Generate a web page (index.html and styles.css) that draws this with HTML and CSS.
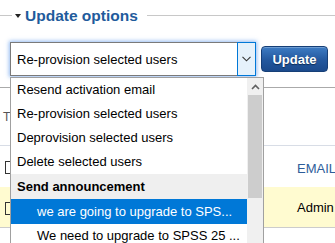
FILE: index.html
```html
<!DOCTYPE html>
<html lang="en">
<head>
    <meta charset="UTF-8">
    <meta name="viewport" content="width=device-width, initial-scale=1.0">
    <title>Update options</title>
    <link rel="stylesheet" href="styles.css">
</head>
<body>

    <fieldset class="options">
        <legend><span class="caret"></span>Update options</legend>
        <div class="action-row">
            <div class="select">
                <span class="select-value">Re-provision selected users</span>
                <span class="select-arrow">
                    <svg width="9" height="6" viewBox="0 0 9 6"><path d="M0.5 0.8 L4.5 4.8 L8.5 0.8" fill="none" stroke="#333" stroke-width="1.1"/></svg>
                </span>

                <!-- open dropdown list, sits over the table -->
                <div class="dropdown">
                    <ul class="dropdown-list">
                        <li>Resend activation email</li>
                        <li>Re-provision selected users</li>
                        <li>Deprovision selected users</li>
                        <li>Delete selected users</li>
                        <li class="group">Send announcement</li>
                        <li class="sub selected">we are going to upgrade to SPS...</li>
                        <li class="sub">We need to upgrade to SPSS 25 ...</li>
                    </ul>
                    <div class="scrollbar">
                        <div class="scroll-up">
                            <svg width="9" height="6" viewBox="0 0 9 6"><path d="M1 5 L4.5 1.5 L8 5" fill="none" stroke="#606060" stroke-width="1.6"/></svg>
                        </div>
                        <div class="scroll-thumb"></div>
                    </div>
                </div>
            </div>
            <button class="btn-update">Update</button>
        </div>
    </fieldset>

    <div class="users">
        <div class="row toolbar-row">
            <div class="cell"><span class="faded">T</span></div>
            <div class="cell"></div>
        </div>
        <div class="row head-row">
            <div class="cell"><span class="checkbox"></span></div>
            <div class="cell head">EMAIL</div>
        </div>
        <div class="row data-row">
            <div class="cell"><span class="checkbox"></span></div>
            <div class="cell">Admin</div>
        </div>
    </div>

</body>
</html>
```

FILE: styles.css
```css
/* Page */
html {
    height: 243px;
    overflow: hidden;
}

body {
    margin: 0;
    height: 243px;
    font-family: "Liberation Sans", Arial, sans-serif;
    font-size: 13px;
    color: #000;
    background: #fff;
    overflow: hidden;
}

/* Fieldset with legend */
.options {
    margin: 5px 0 0 0;
    padding: 0 0 0 10px;
    border: 0;
    border-top: 1px solid #c8c8c8;
    min-width: 0;
}

.options legend {
    margin-left: 2px;
    padding: 0 9px 0 3px;
    font-size: 15.5px;
    font-weight: bold;
    line-height: 21px;
    color: #1f5b9c;
}

.caret {
    display: inline-block;
    width: 0;
    height: 0;
    border-left: 3.5px solid transparent;
    border-right: 3.5px solid transparent;
    border-top: 4px solid #222;
    margin-right: 4px;
    vertical-align: 3px;
}

.action-row {
    display: flex;
    align-items: center;
    margin-top: 16px;
}

/* Select box (focused) */
.select {
    position: relative;
    display: flex;
    align-items: center;
    width: 246px;
    height: 34px;
    box-sizing: border-box;
    border: 1px solid #7a7a7a;
    background: #fff;
    box-shadow: 0 0 4px 1px rgba(90, 150, 235, 0.65);
}

.select-value {
    flex: 1;
    padding-left: 6px;
    white-space: nowrap;
}

.select-arrow {
    display: flex;
    align-items: center;
    justify-content: center;
    align-self: stretch;
    width: 17px;
    margin: -1px -1px -1px 0;
    border: 1px solid #0078d7;
    background: #e5f1fb;
}

.btn-update {
    margin-left: 5px;
    width: 67px;
    height: 26px;
    border: 1px solid #163f77;
    border-radius: 4px;
    background: linear-gradient(#3d7cc4, #23589e 55%, #1b4a8c);
    box-shadow: inset 0 1px 0 rgba(255, 255, 255, 0.25);
    color: #fff;
    font-family: "Liberation Sans", Arial, sans-serif;
    font-size: 13px;
    font-weight: bold;
    text-shadow: 0 1px 1px #0c2b55;
    padding: 0;
}

/* Dropdown menu */
.dropdown {
    position: absolute;
    top: 34px;
    left: -1px;
    z-index: 5;
    display: flex;
    width: 254px;
    box-sizing: border-box;
    border: 1px solid #a0a0a0;
    background: #fff;
}

.dropdown-list {
    flex: 1;
    list-style: none;
    margin: 0;
    padding: 0;
}

.dropdown-list li {
    height: 24px;
    line-height: 24px;
    padding-left: 6px;
    white-space: nowrap;
}

.dropdown-list .group {
    font-weight: bold;
    background: #efefef;
    height: 25px;
    line-height: 25px;
}

.dropdown-list .sub {
    padding-left: 26px;
}

.dropdown-list .selected {
    background: #0078d7;
    color: #fff;
    height: 25px;
    line-height: 25px;
}

.scrollbar {
    width: 16px;
    background: #f0f0f0;
}

.scroll-up {
    display: flex;
    align-items: center;
    justify-content: center;
    height: 17px;
}

.scroll-thumb {
    height: 103px;
    margin: 0 1px;
    background: #cdcdcd;
}

/* Users table behind */
.users {
    margin-top: 11px;
}

.row {
    display: grid;
    grid-template-columns: 292px 1fr;
    align-items: center;
}

.cell {
    padding-left: 5px;
}

.toolbar-row {
    height: 57px;
    border-top: 1px solid #aaa;
}

.faded {
    color: #555;
    font-size: 12px;
    margin-left: -2px;
}

.head-row {
    height: 41px;
    border-top: 1px solid #d8dde6;
}

.head {
    color: #2d5d9a;
    padding-top: 3px;
}

.data-row {
    height: 40px;
    background: #fffbd0;
    border-bottom: 1px solid #ccc;
}

.checkbox {
    display: inline-block;
    width: 11px;
    height: 11px;
    border: 1px solid #333;
    vertical-align: middle;
}
```
